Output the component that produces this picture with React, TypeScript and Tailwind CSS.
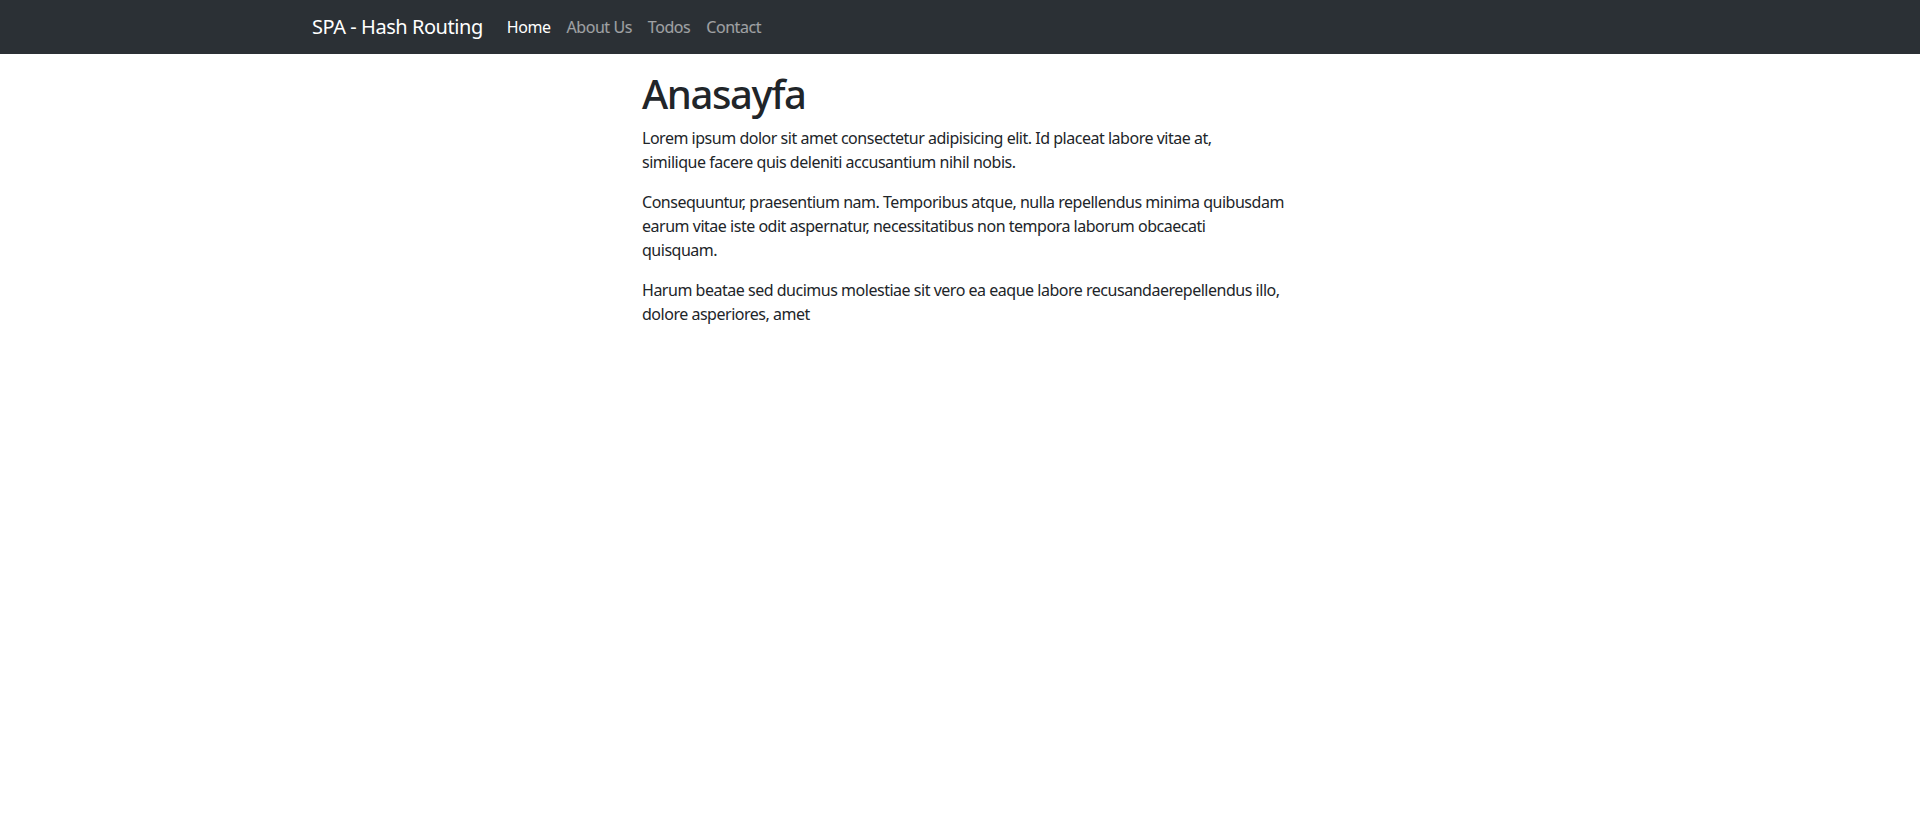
export default function App() {
  const links = [
    { label: 'Home', active: true },
    { label: 'About Us', active: false },
    { label: 'Todos', active: false },
    { label: 'Contact', active: false },
  ];

  return (
    <div className="min-h-screen bg-white text-[#212529] font-['Segoe_UI','Noto_Sans',sans-serif] tracking-[-0.028em]">
      <nav className="h-[54px] bg-[#2b3035]">
        <div className="mx-auto flex h-full max-w-[1320px] items-center px-3">
          <a href="#/" className="mr-4 text-[20px] leading-[30px] text-white">
            SPA - Hash Routing
          </a>
          <ul className="flex">
            {links.map((link) => (
              <li key={link.label}>
                <a
                  href="#/"
                  className={
                    link.active
                      ? 'block px-2 py-2 text-base leading-6 text-white'
                      : 'block px-2 py-2 text-base leading-6 text-white/55'
                  }
                >
                  {link.label}
                </a>
              </li>
            ))}
          </ul>
        </div>
      </nav>

      <main className="mx-auto mt-4 max-w-[1320px] px-3">
        <div className="ml-[330px] w-[660px]">
          <h1 className="mb-2 text-[40px] font-medium leading-[48px] tracking-[-0.035em]">Anasayfa</h1>
          <p className="mb-4 text-base leading-6 tracking-[-0.03em]">
            Lorem ipsum dolor sit amet consectetur adipisicing elit. Id placeat labore vitae at,
            <br />
            similique facere quis deleniti accusantium nihil nobis.
          </p>
          <p className="mb-4 text-base leading-6 tracking-[-0.03em]">
            Consequuntur, praesentium nam. Temporibus atque, nulla repellendus minima quibusdam
            <br />
            earum vitae iste odit aspernatur, necessitatibus non tempora laborum obcaecati
            <br />
            quisquam.
          </p>
          <p className="mb-4 text-base leading-6 tracking-[-0.03em]">
            Harum beatae sed ducimus molestiae sit vero ea eaque labore recusandaerepellendus illo,
            <br />
            dolore asperiores, amet
          </p>
        </div>
      </main>
    </div>
  );
}
